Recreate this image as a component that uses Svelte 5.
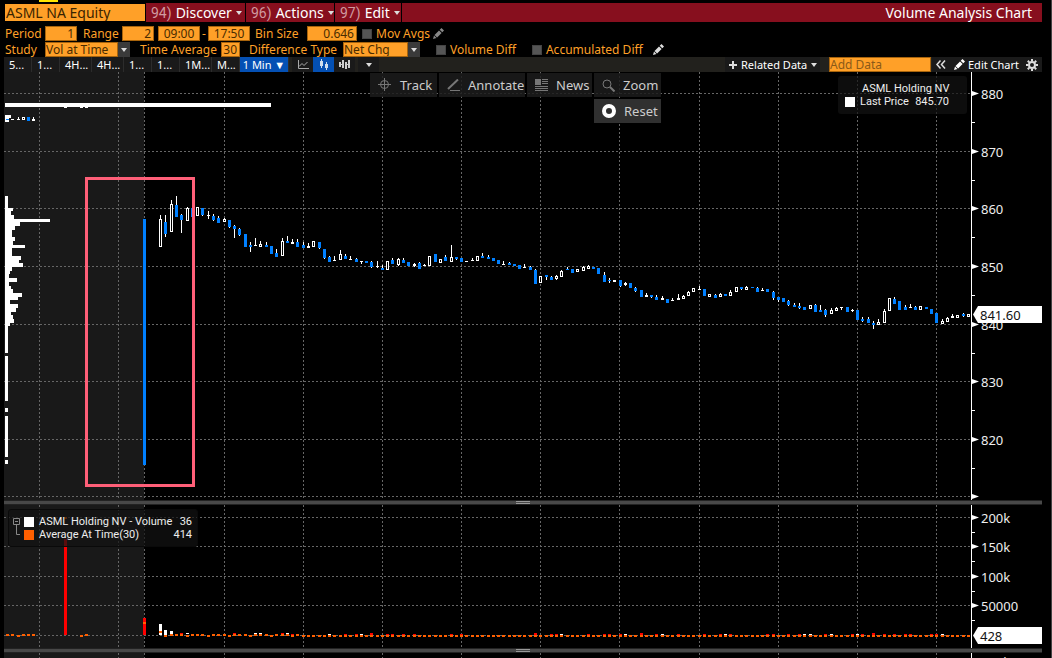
<script lang="ts">
	// [minute, kind, high, top, bottom, low]; b = down, h = hollow up, w = flat
	type Candle = [number, string, number, number, number, number];

	const candles: Candle[] = [
		[-26, 'b', 119, 119, 120, 120], [-25, 'w', 119, 119, 120, 120], [-24, 'w', 117, 119, 120, 120],
		[-23, 'h', 117, 117, 120, 120], [-22, 'b', 117, 117, 121, 121], [-21, 'w', 117, 119, 121, 121],
		[0, 'b', 219, 219, 465, 465], [3, 'h', 215, 219, 247, 247], [4, 'b', 215, 222, 234, 237],
		[5, 'h', 200, 204, 232, 232], [6, 'b', 196, 205, 217, 217], [7, 'b', 214, 215, 220, 233],
		[8, 'h', 207, 208, 221, 221], [9, 'b', 208, 208, 217, 217], [10, 'h', 207, 207, 216, 216],
		[11, 'b', 208, 208, 215, 216], [12, 'w', 211, 215, 216, 219], [13, 'b', 214, 216, 220, 221],
		[14, 'b', 216, 218, 223, 223], [15, 'h', 218, 219, 222, 222], [16, 'b', 220, 220, 227, 228],
		[17, 'b', 225, 226, 229, 238], [18, 'b', 228, 229, 235, 236], [19, 'b', 234, 234, 247, 247],
		[20, 'b', 242, 245, 247, 252], [21, 'w', 238, 245, 246, 246], [22, 'h', 241, 244, 247, 247],
		[23, 'b', 242, 245, 247, 247], [24, 'b', 246, 246, 254, 254], [25, 'b', 249, 253, 257, 257],
		[26, 'h', 238, 241, 256, 256], [27, 'b', 236, 241, 243, 243], [28, 'w', 239, 242, 244, 244],
		[29, 'b', 239, 242, 247, 247], [30, 'b', 242, 245, 248, 248], [31, 'w', 243, 246, 248, 248],
		[32, 'h', 241, 241, 247, 247], [33, 'b', 242, 242, 248, 249], [34, 'b', 249, 249, 258, 259],
		[35, 'b', 256, 257, 262, 262], [36, 'w', 256, 260, 261, 261], [37, 'h', 250, 254, 260, 260],
		[38, 'b', 254, 256, 259, 259], [39, 'w', 256, 259, 260, 260], [40, 'b', 258, 259, 262, 262],
		[41, 'w', 261, 261, 262, 264], [42, 'b', 261, 261, 263, 263], [43, 'b', 261, 262, 267, 268],
		[44, 'w', 261, 266, 267, 268], [45, 'b', 265, 268, 270, 270], [46, 'h', 261, 261, 270, 270],
		[47, 'b', 258, 260, 264, 264], [48, 'h', 258, 259, 265, 266], [49, 'b', 258, 260, 263, 263],
		[50, 'b', 262, 262, 266, 266], [51, 'w', 263, 264, 266, 267], [52, 'b', 262, 263, 269, 269],
		[53, 'w', 264, 265, 266, 266], [54, 'h', 256, 256, 266, 266], [55, 'b', 254, 254, 262, 262],
		[56, 'h', 259, 259, 263, 263], [57, 'b', 255, 257, 261, 261], [58, 'h', 245, 257, 262, 262],
		[59, 'b', 257, 257, 259, 260], [60, 'b', 258, 258, 262, 262], [61, 'w', 261, 261, 262, 262],
		[62, 'w', 258, 260, 261, 261], [63, 'h', 256, 256, 261, 261], [64, 'b', 253, 256, 258, 258],
		[65, 'b', 255, 257, 259, 259], [66, 'b', 258, 258, 261, 261], [67, 'b', 260, 260, 264, 264],
		[68, 'w', 261, 264, 265, 265], [69, 'b', 262, 263, 265, 265], [70, 'b', 264, 264, 266, 266],
		[71, 'b', 265, 265, 269, 269], [72, 'w', 264, 267, 268, 268], [73, 'b', 266, 267, 270, 270],
		[74, 'b', 269, 270, 284, 284], [75, 'h', 276, 276, 283, 283], [76, 'b', 275, 275, 277, 280],
		[77, 'b', 276, 277, 280, 280], [78, 'h', 275, 276, 279, 280], [79, 'h', 270, 271, 277, 277],
		[80, 'b', 267, 269, 270, 270], [81, 'b', 269, 269, 273, 273], [82, 'h', 269, 269, 272, 272],
		[83, 'h', 266, 267, 271, 271], [84, 'h', 265, 266, 269, 269], [85, 'b', 267, 267, 269, 269],
		[86, 'b', 268, 268, 274, 274], [87, 'b', 272, 275, 282, 282], [88, 'b', 278, 280, 281, 283],
		[89, 'w', 280, 280, 282, 282], [90, 'b', 280, 280, 286, 287], [91, 'w', 282, 283, 285, 286],
		[92, 'b', 283, 283, 288, 288], [93, 'b', 287, 288, 291, 292], [94, 'b', 290, 290, 297, 297],
		[95, 'w', 293, 295, 297, 297], [96, 'b', 295, 295, 297, 298], [97, 'b', 295, 297, 300, 300],
		[98, 'w', 296, 298, 300, 300], [99, 'b', 299, 299, 303, 303], [100, 'w', 298, 300, 301, 301],
		[101, 'w', 294, 298, 300, 300], [102, 'h', 295, 296, 299, 299], [103, 'h', 291, 292, 296, 296],
		[104, 'h', 288, 288, 292, 292], [105, 'w', 286, 289, 290, 290], [106, 'b', 289, 289, 296, 296],
		[107, 'h', 294, 294, 297, 297], [108, 'b', 294, 295, 298, 298], [109, 'h', 293, 294, 297, 297],
		[110, 'b', 294, 294, 296, 296], [111, 'h', 290, 292, 296, 296], [112, 'h', 287, 287, 292, 292],
		[113, 'b', 287, 287, 289, 290], [114, 'h', 286, 287, 290, 290], [115, 'b', 287, 287, 288, 288],
		[116, 'b', 287, 288, 292, 292], [117, 'w', 288, 290, 291, 291], [118, 'b', 289, 289, 292, 292],
		[119, 'b', 291, 292, 298, 300], [120, 'b', 297, 297, 300, 302], [121, 'b', 298, 298, 302, 302],
		[122, 'b', 300, 301, 305, 306], [123, 'b', 303, 305, 307, 307], [124, 'b', 303, 306, 308, 309],
		[125, 'b', 307, 307, 310, 310], [126, 'h', 305, 305, 309, 309], [127, 'b', 304, 305, 312, 312],
		[128, 'b', 305, 310, 312, 312], [129, 'b', 309, 310, 315, 317], [130, 'h', 308, 310, 314, 314],
		[131, 'h', 307, 308, 311, 311], [132, 'w', 307, 307, 308, 310], [133, 'b', 307, 307, 312, 312],
		[134, 'w', 309, 310, 311, 312], [135, 'b', 310, 310, 320, 320], [136, 'b', 317, 319, 321, 322],
		[137, 'b', 317, 319, 323, 323], [138, 'b', 321, 323, 325, 329], [139, 'h', 319, 322, 325, 325],
		[140, 'h', 309, 311, 323, 323], [141, 'h', 298, 298, 311, 311], [142, 'b', 297, 299, 304, 304],
		[143, 'b', 301, 301, 310, 310], [144, 'b', 305, 307, 310, 310], [145, 'w', 304, 307, 308, 308],
		[146, 'b', 306, 307, 310, 310], [147, 'h', 306, 306, 310, 310], [148, 'b', 307, 307, 309, 309],
		[149, 'b', 309, 309, 314, 314], [150, 'b', 313, 313, 323, 323], [151, 'h', 319, 321, 324, 324],
		[152, 'h', 317, 318, 322, 322], [153, 'w', 314, 316, 318, 318], [154, 'h', 315, 315, 318, 318],
		[155, 'b', 313, 314, 316, 317], [156, 'h', 314, 314, 317, 317]
	];

	// volume at price, [top, bottom, length]
	const profile = [
		[103, 107, 266], [115, 118, 6], [118, 122, 4],
		[196, 208, 3], [208, 211, 8], [211, 215, 6], [215, 219, 9], [219, 222, 45], [222, 226, 15],
		[226, 230, 10], [230, 237, 7], [237, 241, 10], [241, 245, 8], [245, 248, 20], [248, 256, 7],
		[256, 260, 16], [260, 263, 14], [263, 267, 18], [267, 271, 7], [271, 274, 5], [274, 278, 4],
		[278, 282, 12], [282, 286, 4], [286, 289, 6], [289, 293, 8], [293, 297, 17], [297, 300, 13],
		[300, 304, 5], [304, 308, 13], [308, 312, 11], [312, 315, 6], [315, 319, 8], [319, 323, 9],
		[323, 326, 5], [326, 353, 3], [356, 401, 3], [408, 412, 3], [416, 457, 3], [460, 464, 3]
	];

	const redVolume = [17, 28, 38, 40, 43, 46, 47, 49, 51, 58, 60, 74, 77, 78, 84, 87, 88, 90, 94, 97, 101,
		106, 109, 111, 118, 119, 122, 124, 129, 134, 136, 138, 140, 142, 144, 145, 149, 150];
	const whiteVolume = [8, 21, 22, 27, 35, 41, 79, 91, 98, 110, 125, 126, 130, 135, 151];
	const tallVolume = [7, 17, 26, 43, 74, 94, 138];

	const averages = [-26, -25, -24, -23, -22, -21, -12, -11];
	for (let n = 4; n <= 156; n++) averages.push(n);

	const verticals = [39, 118, 144, 224, 303, 382, 461, 540, 619, 699, 778, 857, 936];
	const priceLines = [93, 151, 208, 266, 324, 381, 439, 496];
	const volumeLines = [517, 546, 576, 605, 635];
	const volumeLabels = ['200k', '150k', '100k', '50000'];

	const intervals = ['5...', '1...', '4H...', '4H...', '1...', '1...', '1M...', 'M...'];

	let security = 'ASML NA Equity';

	const x = (n: number) => Math.round(144.3 + n * 5.28);
	const hasRed = (n: number) => redVolume.includes(n) || tallVolume.includes(n);
</script>

{#snippet pencil()}
	<svg class="icon" width="12" height="12" viewBox="0 0 12 12">
		<path d="M1 11l1-3.5L4.500 10zM2.500 6.900L7 2.400 9.600 5 5.100 9.500zM7.700 1.700L9.500 0 12 2.500 10.300 4.300z" fill="currentColor" />
	</svg>
{/snippet}

{#snippet grid(top: number, height: number, rows: number[])}
	<rect x="4" y={top} width="140" {height} fill="#191919" />
	{#each verticals as v}
		<line x1={v + 0.5} x2={v + 0.5} y1={top} y2={top + height} class="grid" />
	{/each}
	{#each rows as r}
		<line x1="4" x2="971" y1={r + 0.5} y2={r + 0.5} class="grid" />
	{/each}
{/snippet}

<main class="terminal">
	<header class="titlebar">
		<input class="security" aria-label="Security" bind:value={security} />
		<nav>
			<button type="button" class="discover"><i>94)</i>Discover<b class="caret"></b></button>
			<button type="button" class="actions"><i>96)</i>Actions<b class="caret"></b></button>
			<button type="button" class="edit-menu"><i>97)</i>Edit<b class="caret"></b></button>
		</nav>
		<h1>Volume Analysis Chart</h1>
	</header>

	<form class="settings">
		<div class="row">
			<label class="w-period" for="period">Period</label>
			<input id="period" class="num w-31" value="1" />
			<label class="w-range" for="range">Range</label>
			<input id="range" class="num w-31" value="2" />
			<input class="time" aria-label="Start time" value="09:00" />
			<span class="dash">-</span>
			<input class="time" aria-label="End time" value="17:50" />
			<label class="w-bin" for="bin">Bin Size</label>
			<input id="bin" class="num w-bin-input" value="0.646" />
			<label class="check"><input type="checkbox" />Mov Avgs</label>
			<button type="button" class="pencil dim" aria-label="Edit moving averages">{@render pencil()}</button>
		</div>
		<div class="row">
			<label class="w-study" for="study">Study</label>
			<span class="select study"><select id="study"><option>Vol at Time</option></select></span>
			<label class="w-avg" for="average">Time Average</label>
			<input id="average" class="num w-19" value="30" />
			<label class="w-diff" for="diff">Difference Type</label>
			<span class="select diff"><select id="diff"><option>Net Chg</option></select></span>
			<label class="check far"><input type="checkbox" />Volume Diff</label>
			<label class="check far"><input type="checkbox" />Accumulated Diff</label>
			<button type="button" class="pencil wide" aria-label="Edit differences">{@render pencil()}</button>
		</div>
	</form>

	<div class="toolbar">
		<div class="intervals">
			{#each intervals as label}
				<button type="button" class:long={label.length > 4}>{label}</button>
			{/each}
			<button type="button" class="active">1 Min ▼</button>
		</div>
		<div class="types">
			<button type="button" aria-label="Line chart">
				<svg width="12" height="10" viewBox="0 0 12 10" fill="none" stroke="#aaa"><path d="M1.500 0v8.500H12M2 6.500l3-3 2 2L10.500 2" /></svg>
			</button>
			<button type="button" class="active" aria-label="Candle chart">
				<svg width="10" height="11" viewBox="0 0 10 11" fill="#cde"><path d="M1 2h3v5H1zM2 0h1v9H2zM6 5h3v4H6zM7 3h1v8H7z" /></svg>
			</button>
			<button type="button" aria-label="Bar chart">
				<svg width="12" height="11" viewBox="0 0 12 11" fill="#ccc"><path d="M0 3h2v5H0zM3 1h2v8H3zM6 3h2v7H6zM9 1h2v8H9zM1 5h3v1H1zM7 5h3v1H7z" /></svg>
			</button>
			<button type="button" class="more" aria-label="More chart types"><b class="caret"></b></button>
		</div>
		<div class="spacer"></div>
		<button type="button" class="related"><svg width="8" height="8" viewBox="0 0 8 8" stroke="#ddd" stroke-width="2"><path d="M4 0v8M0 4h8" /></svg>Related Data<b class="caret"></b></button>
		<input class="add" aria-label="Add data" placeholder="Add Data" />
		<button type="button" class="fold" aria-label="Collapse">
			<svg width="10" height="9" viewBox="0 0 10 9" fill="none" stroke="#ddd" stroke-width="1.500"><path d="M4.500.5l-3.500 4 3.500 4M9 .5l-3.500 4 3.500 4" /></svg>
		</button>
		<button type="button" class="edit">{@render pencil()}Edit Chart</button>
		<button type="button" class="gear" aria-label="Settings">
			<svg width="12" height="12" viewBox="0 0 12 12" fill="none" stroke="#ddd">
				<circle cx="6" cy="6" r="3" stroke-width="2" />
				<path d="M6 0v2M6 10v2M0 6h2M10 6h2M1.800 1.800l1.400 1.400M8.800 8.800l1.400 1.400M1.800 10.200l1.400-1.400M8.800 3.200l1.400-1.400" stroke-width="2" />
			</svg>
		</button>
	</div>

	<section class="pane price">
		<svg class="plot" viewBox="4 72 967 428" preserveAspectRatio="none" shape-rendering="crispEdges">
			{@render grid(72, 428, priceLines)}
			{#each [-15, -12, -11] as n}
				<rect x={x(n) - 1} y="107" width="3" height="1" fill="#fff" />
			{/each}
			{#each profile as [top, bottom, length]}
				<rect x="5" y={top} width={length} height={bottom - top} fill="#fff" />
			{/each}
			{#each candles as [n, kind, high, top, bottom, low]}
				<rect x={x(n)} y={high} width="1" height={low - high} fill="#fff" />
				<rect x={x(n) - 1} y={top} width="3" height={bottom - top} fill={kind === 'b' ? '#0080ff' : '#fff'} />
				{#if kind === 'h'}
					<rect x={x(n)} y={top + 1} width="1" height={bottom - top - 2} fill="#000" />
				{/if}
			{/each}
			<rect x="86.500" y="178.500" width="107" height="307" fill="none" stroke="#ff5f78" stroke-width="3" />
		</svg>
		<svg class="axis" width="71" height="428" viewBox="971 72 71 428">
			<rect x="971" y="72" width="1" height="428" fill="#fff" />
			{#each priceLines as y, i}
				<path d="M972 {y - 2}l7 2.500-7 2.500z" fill="#fff" />
				{#if i < 7}
					<rect x="972" y={y + 29} width="3" height="1" fill="#fff" />
					<text x="981" y={y + 6}>{880 - i * 10}</text>
				{/if}
			{/each}
			<path d="M973 314.500l5-8.500h64v17h-64z" fill="#fff" />
			<text class="current" x="980" y="320">841.60</text>
		</svg>

		<div class="tools">
			<button type="button">
				<svg width="14" height="14" viewBox="0 0 14 14" fill="none" stroke="#777"><circle cx="6.500" cy="6.500" r="4" /><path d="M6.500 0v13M0 6.500h13" /></svg>Track
			</button>
			<button type="button">
				<svg width="13" height="12" viewBox="0 0 13 12" fill="none" stroke="#777"><path d="M1 10L11 .5" stroke-width="2" /><path d="M3 11.500h10" /></svg>Annotate
			</button>
			<button type="button">
				<svg width="13" height="12" viewBox="0 0 13 12" fill="#777"><path d="M0 0h6v6H0zM7 0h6v1H7zM7 2h6v1H7zM7 4h6v1H7zM0 7h13v1H0zM0 9h13v1H0zM0 11h13v1H0z" /></svg>News
			</button>
			<button type="button">
				<svg width="13" height="13" viewBox="0 0 13 13" fill="none" stroke="#777"><circle cx="5" cy="5" r="4" /><path d="M8 8l4.500 4.500" stroke-width="2" /></svg>Zoom
			</button>
			<button type="button" class="reset">
				<svg width="14" height="14" viewBox="0 0 14 14"><circle cx="7" cy="7" r="5" fill="none" stroke="#fff" stroke-width="4" /></svg>Reset
			</button>
		</div>

		<div class="legend last">
			<span class="name">ASML Holding NV</span>
			<i class="swatch"></i><span>Last Price</span><span>845.70</span>
		</div>
	</section>

	<div class="divider"><i></i></div>

	<section class="pane volume">
		<svg class="plot" viewBox="4 505 967 143" preserveAspectRatio="none" shape-rendering="crispEdges">
			{@render grid(505, 143, volumeLines)}
			<rect x="64" y="517" width="3" height="2" fill="#ff5f00" />
			<rect x="64" y="539" width="3" height="96" fill="#f00" />
			<rect x="143" y="618" width="3" height="17" fill="#f00" />
			<rect x="143" y="622" width="3" height="2" fill="#ff5f00" />
			<rect x="159" y="624" width="3" height="11" fill="#fff" />
			<rect x="159" y="631" width="3" height="2" fill="#ff5f00" />
			<rect x="164" y="630" width="3" height="5" fill="#fff" />
			<rect x="170" y="631" width="3" height="4" fill="#fff" />
			{#each averages as n}
				{#if hasRed(n)}
					<rect x={x(n) - 1} y={tallVolume.includes(n) ? 633 : 634} width="3" height="2" fill="#f00" />
				{:else if whiteVolume.includes(n)}
					<rect x={x(n) - 1} y={n < 30 ? 633 : 634} width="3" height="1" fill="#fff" />
				{/if}
				<rect x={x(n) - 1} y={n < 30 && n % 4 ? 634 : 635} width="3" height="2" fill="#ff5f00" />
			{/each}
		</svg>
		<svg class="axis" width="71" height="143" viewBox="971 505 71 143">
			<rect x="971" y="505" width="1" height="143" fill="#fff" />
			{#each volumeLabels as label, i}
				<path d="M972 {volumeLines[i] - 2}l7 2.500-7 2.500z" fill="#fff" />
				<rect x="972" y={volumeLines[i] + 15} width="3" height="1" fill="#fff" />
				<text x="981" y={volumeLines[i] + 6}>{label}</text>
			{/each}
			<path d="M973 635.500l5-8.500h64v17h-64z" fill="#fff" />
			<text class="current" x="980" y="641">428</text>
		</svg>

		<div class="legend volumes">
			<svg width="11" height="20" viewBox="0 0 11 20" fill="none" stroke="#888"><path d="M.5.5h6v6h-6zM2 3.500h3M3.500 7v9.500H7" /></svg>
			<i class="swatch"></i><span>ASML Holding NV - Volume</span><span>36</span>
			<i class="swatch orange"></i><span>Average At Time(30)</span><span>414</span>
		</div>
	</section>

	<div class="divider"><i></i></div>

	<section class="pane">
		<svg class="plot next" viewBox="4 652 967 30" preserveAspectRatio="none" shape-rendering="crispEdges">
			{@render grid(652, 30, [])}
		</svg>
		<svg class="axis" width="71" height="30" viewBox="971 652 71 30">
			<rect x="971" y="652" width="1" height="30" fill="#fff" />
			<text x="981" y="666">400k</text>
		</svg>
	</section>
</main>

<style>
	:global(body) {
		background: #000;
	}

	.terminal {
		position: relative;
		box-sizing: border-box;
		height: 100vh;
		overflow: hidden;
		padding: 3px 9px 0 4px;
		border-right: 1px solid #444;
		background: #000;
		color: #eee;
		font: 12px/15px 'Noto Sans', 'Open Sans', sans-serif;
	}

	/* marker of the tab above the window */
	.terminal::before {
		content: '';
		position: absolute;
		top: 0;
		left: 39px;
		width: 19px;
		height: 2px;
		background: #ffe600;
	}

	button,
	input,
	select {
		box-sizing: border-box;
		margin: 0;
		border: 0;
		border-radius: 0;
		padding: 0;
		background: none;
		color: inherit;
		font: inherit;
	}

	button {
		display: flex;
		align-items: center;
		white-space: nowrap;
	}

	.caret {
		border: 3px solid transparent;
		border-top: 4px solid #ddd;
		border-bottom: 0;
	}

	.titlebar {
		display: flex;
		height: 19px;
		background: #870f1e;
		color: #fff;
		font-size: 14px;
		line-height: 19px;
	}

	.security {
		width: 142px;
		border: 1px solid #000;
		padding-left: 1px;
		background: #ffa028;
		color: #3a2400;
	}

	nav {
		display: flex;
	}

	nav button {
		gap: 4px;
		border-right: 1px solid #000;
		padding: 0 7px 0 5px;
	}

	nav .caret {
		margin-left: auto;
	}

	.discover {
		width: 100px;
	}

	.actions {
		width: 89px;
	}

	.edit-menu {
		width: 67px;
	}

	nav i {
		color: #d09aa0;
		font: 14px 'Liberation Sans Narrow', Roboto, sans-serif;
	}

	h1 {
		margin: 0 10px 0 auto;
		font-size: 14px;
		font-weight: 400;
	}

	.settings {
		padding: 4px 0 0 1px;
		color: #ffa028;
	}

	.row {
		display: flex;
		align-items: center;
		height: 15px;
		margin-bottom: 1px;
		white-space: nowrap;
	}

	.row + .row {
		margin-bottom: 0;
	}

	.row input,
	.select select {
		height: 15px;
		border: 1px solid #a8640c;
		background: #ffa028;
		color: #4a2c00;
		line-height: 13px;
	}

	.num {
		padding-right: 2px;
		text-align: right;
	}

	.w-period,
	.w-study {
		width: 40px;
	}

	.w-31 {
		width: 32px;
	}

	.w-range {
		width: 39px;
		margin-left: 6px;
	}

	.time {
		width: 42px;
		text-align: center;
	}

	#range {
		margin-right: 4px;
	}

	.dash {
		width: 8px;
		text-align: center;
	}

	.w-bin {
		width: 52px;
		margin-left: 5px;
	}

	.w-bin-input {
		width: 50px;
	}

	.w-19 {
		width: 19px;
	}

	.check {
		display: flex;
		align-items: center;
		gap: 4px;
		margin-left: 5px;
	}

	.far {
		margin-left: 16px;
	}

	.row .check input {
		appearance: none;
		width: 10px;
		height: 10px;
		border: 1px solid #444;
		background: #555;
	}

	.row .check input:checked {
		background: #ffa028;
	}

	.pencil {
		margin-left: 2px;
		color: #ddd;
	}

	.dim {
		color: #888;
	}

	.wide {
		margin-left: 9px;
	}

	.select {
		position: relative;
		display: flex;
		background: #3a3a3a;
		padding-right: 12px;
	}

	.select::after {
		content: '';
		position: absolute;
		right: 3px;
		top: 6px;
		border: 3px solid transparent;
		border-top: 4px solid #ddd;
		border-bottom: 0;
	}

	.select select {
		appearance: none;
		width: 100%;
	}

	.study {
		width: 73px;
	}

	.diff {
		width: 65px;
	}

	.w-avg {
		width: 81px;
		margin-left: 10px;
	}

	.w-diff {
		width: 94px;
		margin-left: 9px;
	}

	.toolbar {
		display: flex;
		height: 15px;
		background: #22211d;
		font-size: 11px;
	}

	.toolbar button {
		background: #1a1a1a;
		color: #fff;
	}

	.intervals,
	.types {
		display: flex;
	}

	.intervals button {
		width: 28px;
		border-right: 1px solid #2c2c2c;
		padding-left: 5px;
	}

	.intervals .long {
		width: 32px;
	}

	.toolbar .active {
		background: #0450b4;
	}

	.intervals .active {
		width: 49px;
		justify-content: center;
		padding: 0;
	}

	.types {
		margin-left: 3px;
	}

	.types button {
		width: 21px;
		justify-content: center;
	}

	.types .more {
		margin-left: 3px;
	}

	.spacer {
		flex: 1;
	}

	.related {
		gap: 4px;
		width: 95px;
		padding-left: 4px;
	}

	.add {
		width: 102px;
		margin: 0 1px 0 9px;
		border: 1px solid #a8640c;
		background: #ffa028;
		font-size: 12px;
		line-height: 13px;
	}

	.add::placeholder {
		color: #8a5a18;
		opacity: 1;
	}

	.fold {
		width: 18px;
		justify-content: center;
	}

	.edit {
		gap: 3px;
		width: 72px;
		padding-left: 3px;
	}

	.gear {
		width: 20px;
		justify-content: center;
	}

	.pane {
		position: relative;
		display: flex;
	}

	.plot {
		flex: 1;
		min-width: 0;
		height: 428px;
	}

	.volume .plot {
		height: 143px;
	}

	.plot.next {
		height: 30px;
	}

	.axis {
		flex: none;
	}

	.axis text {
		fill: #eee;
		font-size: 13px;
	}

	.axis .current {
		fill: #111;
	}

	.grid {
		stroke: #666;
		stroke-width: 1;
		stroke-dasharray: 2 2;
	}

	.tools {
		position: absolute;
		top: 1px;
		right: 381px;
		display: grid;
		grid-template-columns: 67px 86px 65px 67px;
		gap: 2px;
	}

	.tools button {
		height: 24px;
		gap: 8px;
		padding-left: 8px;
		background: rgba(28, 28, 28, 0.85);
		color: #ccc;
		font-size: 13px;
	}

	.tools .reset {
		grid-column: 4;
		background: #303030;
	}

	.legend {
		position: absolute;
		display: grid;
		align-items: center;
		box-sizing: border-box;
		height: 38px;
		border-radius: 3px;
		background: rgba(18, 18, 18, 0.7);
		font: 11px/13px Roboto, 'Noto Sans', sans-serif;
		white-space: nowrap;
	}

	.last {
		top: 4px;
		right: 75px;
		grid-template-columns: 10px 1fr auto;
		column-gap: 5px;
		width: 129px;
		padding: 6px 18px 6px 7px;
	}

	.name {
		grid-column: 1 / -1;
		padding-left: 17px;
	}

	.swatch {
		width: 10px;
		height: 10px;
		background: #fff;
	}

	.orange {
		background: #ff5f00;
	}

	.volumes {
		top: 4px;
		left: 4px;
		grid-template-columns: 11px 10px 1fr auto;
		width: 190px;
		border: 1px solid #0a0a0a;
		padding: 5px 5px 5px 4px;
	}

	.volumes svg {
		grid-row: 1 / 3;
	}

	.volumes span:nth-of-type(odd) {
		padding-left: 5px;
	}

	.volumes span:nth-of-type(even) {
		text-align: right;
	}

	.divider {
		display: flex;
		justify-content: center;
		align-items: center;
		height: 3px;
		border: 1px solid #222;
		border-width: 1px 0;
		background: #484848;
	}

	.divider i {
		width: 14px;
		height: 1px;
		border: 1px solid #999;
		border-width: 1px 0;
	}
</style>
